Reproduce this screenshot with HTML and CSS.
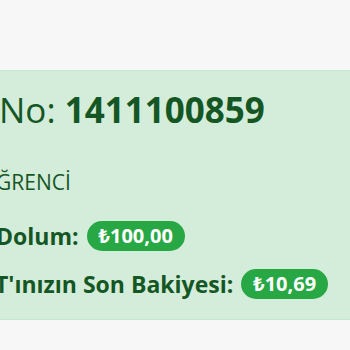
FILE: index.html
```html
<!DOCTYPE html>
<html lang="tr">
<head>
<meta charset="utf-8">
<link rel="stylesheet" href="styles.css">
</head>
<body>
<div class="top"></div>
<section class="alert">
  <h3 class="card-no"><span class="lbl">No:</span> <strong>1411100859</strong></h3>
  <p class="type"><span class="cut cut-g">ĞRENCİ</span></p>
  <p class="row row-load"><span class="cut cut-d">Dolum:</span> <span class="badge">₺100,00</span></p>
  <p class="row row-bal"><span class="cut cut-t">T'ınızın Son Bakiyesi:</span> <span class="badge">₺10,69</span></p>
</section>
</body>
</html>
```
FILE: styles.css
```css
html, body {
  margin: 0;
  padding: 0;
  background: #f7f7f7;
  font-family: "Open Sans", "Noto Sans", sans-serif;
  overflow: hidden;
}
.top {
  height: 70px;
}
.alert {
  background: #d4edda;
  border-top: 1px solid #c3e6cb;
  border-bottom: 1px solid #c3e6cb;
  color: #155724;
  height: 248px;
  padding: 0;
  overflow: hidden;
}
.card-no {
  margin: 17px 0 0 -1px;
  font-size: 35px;
  font-weight: 400;
  line-height: 44px;
  white-space: nowrap;
}
.card-no strong {
  font-weight: 700;
}
.type {
  margin: 36px 0 0 0;
  font-size: 21px;
  line-height: 28px;
  white-space: nowrap;
}
.row {
  margin: 0;
  font-size: 23px;
  font-weight: 700;
  line-height: 30px;
  white-space: nowrap;
  display: flex;
  align-items: center;
  gap: 8px;
}
.row-load { margin-top: 25px; }
.row-bal { margin-top: 18px; }
.cut { display: inline-block; }
.cut-g { margin-left: -4px; }
.cut-d { margin-left: -4px; }
.cut-t { margin-left: -5px; }
.badge {
  display: inline-block;
  background: #28a745;
  color: #fff;
  font-weight: 700;
  font-size: 20px;
  line-height: 30px;
  padding: 0 12px;
  border-radius: 15px;
}
```
